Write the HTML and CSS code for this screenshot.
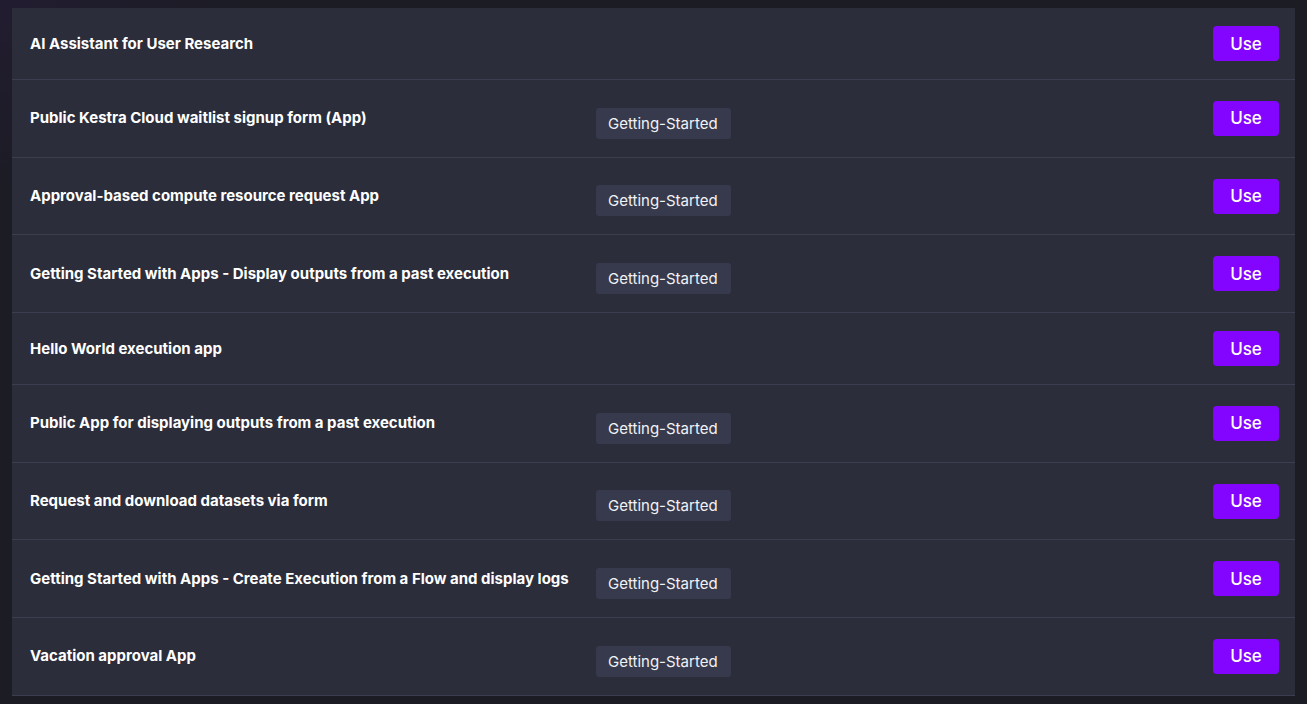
FILE: index.html
```html
<!DOCTYPE html>
<html lang="en">
<head>
<meta charset="utf-8">
<title>Apps</title>
<link rel="stylesheet" href="styles.css">
</head>
<body>
<div class="page">
  <div class="list">
    <div class="row short">
      <div class="title">AI Assistant for User Research</div>
      <div class="tags"></div>
      <button class="use">Use</button>
    </div>
    <div class="row">
      <div class="title">Public Kestra Cloud waitlist signup form (App)</div>
      <div class="tags"><span class="tag">Getting-Started</span></div>
      <button class="use">Use</button>
    </div>
    <div class="row">
      <div class="title">Approval-based compute resource request App</div>
      <div class="tags"><span class="tag">Getting-Started</span></div>
      <button class="use">Use</button>
    </div>
    <div class="row">
      <div class="title">Getting Started with Apps - Display outputs from a past execution</div>
      <div class="tags"><span class="tag">Getting-Started</span></div>
      <button class="use">Use</button>
    </div>
    <div class="row short">
      <div class="title">Hello World execution app</div>
      <div class="tags"></div>
      <button class="use">Use</button>
    </div>
    <div class="row">
      <div class="title">Public App for displaying outputs from a past execution</div>
      <div class="tags"><span class="tag">Getting-Started</span></div>
      <button class="use">Use</button>
    </div>
    <div class="row">
      <div class="title">Request and download datasets via form</div>
      <div class="tags"><span class="tag">Getting-Started</span></div>
      <button class="use">Use</button>
    </div>
    <div class="row">
      <div class="title">Getting Started with Apps - Create Execution from a Flow and display logs</div>
      <div class="tags"><span class="tag">Getting-Started</span></div>
      <button class="use">Use</button>
    </div>
    <div class="row">
      <div class="title">Vacation approval App</div>
      <div class="tags"><span class="tag">Getting-Started</span></div>
      <button class="use">Use</button>
    </div>
  </div>
</div>
</body>
</html>
```
FILE: styles.css
```css
html, body {
  margin: 0;
  padding: 0;
  height: 100%;
}
body {
  background: #1b1c24;
  font-family: "Inter", "Roboto", "Liberation Sans", sans-serif;
  color: #ffffff;
}
.page {
  min-height: 704px;
  box-sizing: border-box;
  padding: 8px 12px 0 12px;
  background: radial-gradient(ellipse 260px 200px at 0 0, #221c30 0%, rgba(27,28,36,0) 100%);
}
.list {
  width: 1283px;
  background: #2b2d3a;
}
.row {
  display: grid;
  grid-template-columns: 566px 1fr auto;
  align-items: center;
  padding: 18px 16px 18px 18px;
  border-bottom: 1px solid #3c3e4f;
  min-height: 35px;
}
.title {
  font-size: 15px;
  font-weight: 700;
  color: #ffffff;
  line-height: 20px;
}
.tags {
  display: flex;
  padding-top: 9.7px;
}
.row.short .tags {
  padding-top: 0;
}
.tag {
  display: inline-block;
  background: #373a4d;
  color: #f2f2f5;
  font-size: 15px;
  font-weight: 400;
  line-height: 31px;
  height: 31px;
  padding: 0 13px 0 12px;
  border-radius: 3px;
}
.use {
  width: 66px;
  height: 35px;
  border: none;
  border-radius: 4px;
  background: #8405ff;
  color: #ffffff;
  font-family: inherit;
  font-size: 17px;
  font-weight: 500;
  cursor: pointer;
  padding: 0;
}
```
